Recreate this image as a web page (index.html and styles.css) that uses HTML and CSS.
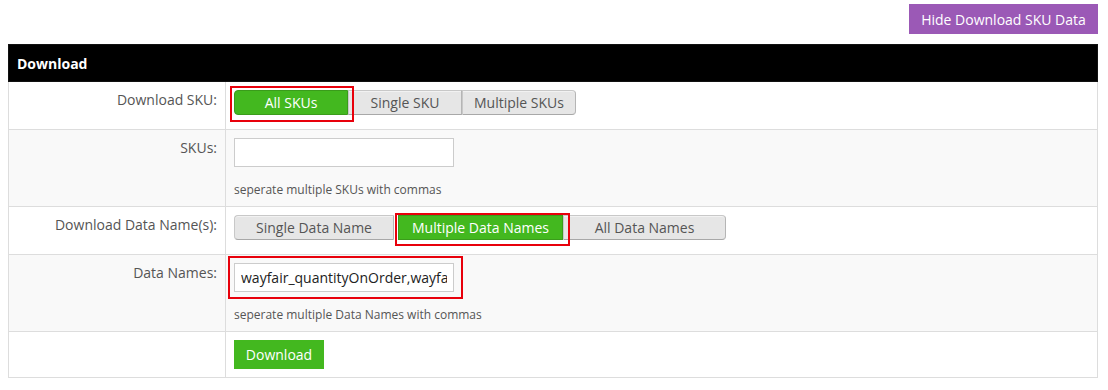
FILE: index.html
```html
<!DOCTYPE html>
<html lang="en">
<head>
    <meta charset="UTF-8">
    <title>Download SKU Data</title>
    <link rel="stylesheet" href="styles.css">
</head>
<body>
<div class="top-bar">
    <button class="purple-button">Hide Download SKU Data</button>
</div>
<table class="download-table">
    <tr>
        <th colspan="2" class="table-head">Download</th>
    </tr>
    <tr>
        <td class="label">Download SKU:</td>
        <td class="field">
            <div class="btn-group">
                <button class="group-btn active marked mark-sku">All SKUs</button>
                <button class="group-btn">Single SKU</button>
                <button class="group-btn">Multiple SKUs</button>
            </div>
        </td>
    </tr>
    <tr class="shaded">
        <td class="label">SKUs:</td>
        <td class="field">
            <input type="text" class="text-input">
            <p class="help">seperate multiple SKUs with commas</p>
        </td>
    </tr>
    <tr>
        <td class="label">Download Data Name(s):</td>
        <td class="field">
            <div class="btn-group">
                <button class="group-btn wide-1">Single Data Name</button>
                <button class="group-btn active marked mark-names">Multiple Data Names</button>
                <button class="group-btn wide-3">All Data Names</button>
            </div>
        </td>
    </tr>
    <tr class="shaded">
        <td class="label">Data Names:</td>
        <td class="field">
            <div class="marked mark-input">
                <input type="text" class="text-input" value="wayfair_quantityOnOrder,wayfair_quantityAvailable">
            </div>
            <p class="help">seperate multiple Data Names with commas</p>
        </td>
    </tr>
    <tr>
        <td class="label"></td>
        <td class="field">
            <button class="green-button">Download</button>
        </td>
    </tr>
</table>
</body>
</html>
```

FILE: styles.css
```css
body {
    margin: 4px 10px 0 8px;
    font-family: "Open Sans", Arial, sans-serif;
    color: #555;
    background-color: white;
}

.top-bar {
    display: flex;
    justify-content: flex-end;
    margin-bottom: 10px;
}

.purple-button {
    background-color: #9b59b6;
    color: white;
    border: none;
    height: 30px;
    width: 189px;
    font-family: inherit;
    font-size: 14px;
    cursor: pointer;
}

.download-table {
    width: 1090px;
    border-collapse: collapse;
    border: 1px solid #ddd;
}

.table-head {
    background-color: black;
    color: white;
    text-align: left;
    font-size: 14px;
    font-weight: bold;
    height: 36px;
    padding: 0 8px;
    border: 1px solid #111;
}

td {
    border: 1px solid #ddd;
    vertical-align: top;
}

.shaded td {
    background-color: #f9f9f9;
}

.label {
    width: 200px;
    text-align: right;
    font-size: 14px;
    line-height: 18px;
    padding: 9px 8px 8px 8px;
}

.field {
    padding: 8px 8px 8px 8px;
}

.btn-group {
    display: flex;
    margin-bottom: 6px;
}

.group-btn {
    height: 25px;
    width: 114px;
    font-family: inherit;
    font-size: 14px;
    color: #555;
    background-color: #e6e6e6;
    border: 1px solid #c8c8c8;
    border-bottom-color: #a8a8a8;
    border-right-color: #b5b5b5;
    box-shadow: inset 0 1px 0 #f2f2f2;
    padding: 0;
    cursor: pointer;
}

.group-btn:first-child {
    border-radius: 4px 0 0 4px;
}

.group-btn:last-child {
    border-radius: 0 4px 4px 0;
}

.group-btn.active {
    background-color: #43b81f;
    border-color: #3a9c1b;
    color: white;
    box-shadow: none;
}

.wide-1 {
    width: 160px;
}

.mark-names {
    width: 165px;
    margin-left: 4px;
}

.wide-3 {
    width: 163px;
}

.marked {
    position: relative;
}

.marked::after {
    content: "";
    position: absolute;
    border: 2px solid #e8000b;
    pointer-events: none;
}

.mark-sku::after {
    left: -5px;
    right: -7px;
    top: -5px;
    bottom: -8px;
}

.mark-names::after {
    left: -4px;
    right: -8px;
    top: -3px;
    bottom: -7px;
}

.mark-input {
    width: 220px;
}

.mark-input::after {
    left: -6px;
    right: -9px;
    top: -7px;
    bottom: -7px;
}

.text-input {
    display: block;
    box-sizing: border-box;
    width: 220px;
    height: 29px;
    margin: 0;
    padding: 0 6px;
    border: 1px solid #ccc;
    background-color: white;
    font-family: inherit;
    font-size: 14px;
    color: #222;
}

.help {
    margin: 14px 0 0 0;
    font-size: 12px;
    line-height: 17px;
    color: #555;
}

.green-button {
    background-color: #43b81f;
    color: white;
    border: none;
    height: 29px;
    width: 90px;
    font-family: inherit;
    font-size: 14px;
    cursor: pointer;
}
```
